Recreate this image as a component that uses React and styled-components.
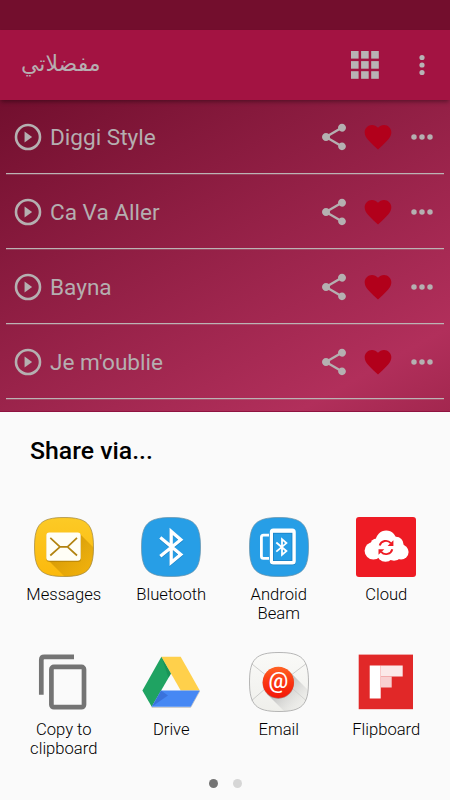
import React from "react";
import styled, { createGlobalStyle } from "styled-components";

const songs = ["Diggi Style", "Ca Va Aller", "Bayna", "Je m'oublie"];

const SQUIRCLE = "M.5 30C.5 7 7 .5 30 .5S59.5 7 59.5 30 53 59.5 30 59.5 .5 53 .5 30Z";

function App() {
  return (
    <>
      <GlobalStyle />
      <Screen>
        <StatusBar />
        <Header>
          <Title dir="rtl">مفضلاتي</Title>
          <GridIcon />
          <MenuIcon />
        </Header>
        <SongList>
          {songs.map((name) => (
            <Song key={name} name={name} />
          ))}
        </SongList>
        <Sheet>
          <SheetTitle>Share via...</SheetTitle>
          <Targets>
            {targets.map((target) => (
              <Target key={target.label}>
                <TargetIcon viewBox="0 0 60 60">{target.icon}</TargetIcon>
                <Label>{target.label}</Label>
              </Target>
            ))}
          </Targets>
          <Pager>
            <PageDot $active />
            <PageDot />
          </Pager>
        </Sheet>
      </Screen>
    </>
  );
}

const Song = ({ name }) => {
  return (
    <Row>
      <Glyph viewBox="0 0 24 24">
        <circle cx="12" cy="12" r="9" fill="none" stroke="#b5b0b1" strokeWidth="1.95" />
        <path d="M9.4 7.8v8.4L15.1 12z" />
      </Glyph>
      <SongName>{name}</SongName>
      <Actions>
        <Glyph viewBox="0 0 24 24">
          <path d="M18 16.08c-.76 0-1.44.3-1.96.77L8.91 12.7c.05-.23.09-.46.09-.7s-.04-.47-.09-.7l7.05-4.11c.54.5 1.25.81 2.04.81 1.66 0 3-1.34 3-3s-1.34-3-3-3-3 1.34-3 3c0 .24.04.47.09.7L8.04 9.81C7.5 9.31 6.79 9 6 9c-1.66 0-3 1.34-3 3s1.34 3 3 3c.79 0 1.5-.31 2.04-.81l7.12 4.16c-.05.21-.08.43-.08.65 0 1.61 1.31 2.92 2.92 2.92s2.92-1.31 2.92-2.92-1.31-2.92-2.92-2.92z" />
        </Glyph>
        <Glyph viewBox="0 0 24 24" $color="#b2001b">
          <path d="M12 21.35l-1.45-1.32C5.4 15.36 2 12.28 2 8.5 2 5.42 4.42 3 7.5 3c1.74 0 3.41.81 4.5 2.09C13.09 3.81 14.76 3 16.5 3 19.58 3 22 5.42 22 8.5c0 3.78-3.4 6.86-8.55 11.54L12 21.35z" />
        </Glyph>
        <Glyph viewBox="0 0 24 24">
          <circle cx="6" cy="12" r="2.05" />
          <circle cx="12" cy="12" r="2.05" />
          <circle cx="18" cy="12" r="2.05" />
        </Glyph>
      </Actions>
    </Row>
  );
};

const GridIcon = () => (
  <HeaderGlyph viewBox="0 0 28 28" $size={28} $right={29.5}>
    {[0, 10.1, 20.2].map((y) =>
      [0, 10.1, 20.2].map((x) => <rect key={x + "-" + y} x={x} y={y} width="7.6" height="7.6" />)
    )}
  </HeaderGlyph>
);

const MenuIcon = () => (
  <HeaderGlyph viewBox="0 0 28 28" $size={28} $right={13.8}>
    <circle cx="14" cy="6.5" r="2.6" />
    <circle cx="14" cy="14" r="2.6" />
    <circle cx="14" cy="21.5" r="2.6" />
  </HeaderGlyph>
);

const MessagesIcon = () => (
  <>
    <defs>
      <linearGradient id="msg" x2="0" y2="1">
        <stop offset="0" stopColor="#fcca26" />
        <stop offset="1" stopColor="#fcb90c" />
      </linearGradient>
      <linearGradient id="msgShade" x2="1" y2="1">
        <stop offset=".3" stopColor="#c98e00" stopOpacity=".75" />
        <stop offset="1" stopColor="#e0a208" stopOpacity=".3" />
      </linearGradient>
      <clipPath id="squircle">
        <path d={SQUIRCLE} />
      </clipPath>
    </defs>
    <path d={SQUIRCLE} fill="url(#msg)" />
    <path d="M46 17L60 31V60H31L14 43Z" fill="url(#msgShade)" clipPath="url(#squircle)" />
    <path d={SQUIRCLE} fill="none" stroke="#9c8440" strokeWidth=".7" />
    <rect x="12.3" y="16.3" width="34.7" height="28.6" rx="3" fill="#a87806" opacity=".6" />
    <rect x="12.3" y="15.6" width="34.4" height="28.2" rx="3" fill="#fffef6" />
    <path d="M16.3 20.8L26 29.8H33.5L43 20.8M16.3 38.5L26 29.8M33.5 29.8L43 38.5" fill="none" stroke="#b28310" strokeWidth="1.7" />
  </>
);

const BluetoothIcon = () => (
  <>
    <path d={SQUIRCLE} fill="#279ee6" stroke="#6790a8" strokeWidth=".7" />
    <path d="M19.3 21.3L39.8 38.2 30.2 46.3V15.2L39.8 23.6 19.3 40" fill="none" stroke="#1680c4" strokeWidth="3.3" />
    <path d="M19.3 20.5L39.8 37.4 30.2 45.5V14.4L39.8 22.8 19.3 39.2" fill="none" stroke="#fff" strokeWidth="3.3" />
  </>
);

const BeamIcon = () => (
  <>
    <path d={SQUIRCLE} fill="#279ee6" stroke="#6790a8" strokeWidth=".7" />
    <path d="M20 18.2H14.5Q12.4 18.2 12.4 20.3V39.3Q12.4 41.4 14.5 41.4H20" fill="none" stroke="#fff" strokeWidth="2.8" />
    <rect x="20.8" y="12.2" width="26" height="36" rx="3.5" fill="#1680c4" />
    <rect x="20.8" y="11.5" width="26" height="36" rx="3.5" fill="#fff" />
    <rect x="24" y="15.8" width="19.4" height="28.2" fill="#1c84c8" />
    <rect x="24.9" y="16.7" width="17.6" height="26.4" fill="#279ee6" />
    <path d="M27.3 25.5L37.4 34.1 33 37.8V22.2L37.4 26.1 27.3 34.6" fill="none" stroke="#fff" strokeWidth="1.8" />
  </>
);

const CloudIcon = () => (
  <>
    <rect width="60" height="60" rx="3" fill="#ee1b24" />
    <g fill="#fff">
      <circle cx="17.4" cy="33.8" r="8.8" />
      <circle cx="20.5" cy="27.5" r="6" />
      <circle cx="30.2" cy="24.2" r="10.6" />
      <circle cx="40" cy="27.3" r="7.5" />
      <circle cx="45" cy="35" r="7.6" />
      <circle cx="38" cy="34.5" r="9.2" />
      <circle cx="29.5" cy="36.2" r="8.6" />
    </g>
    <path d="M23.7 28.6A6.4 6.4 0 0 1 34.8 26.2M36.3 32.2A6.4 6.4 0 0 1 25.2 34.8" fill="none" stroke="#ee1b24" strokeWidth="1.9" />
    <path d="M37.4 23.3V29H31.6ZM22.5 37.8V32.2H28.3Z" fill="#ee1b24" />
  </>
);

const CopyIcon = () => (
  <g fill="none" stroke="#747474" strokeWidth="4.7">
    <path d="M40 4.9H10.3Q7.3 4.9 7.3 7.9V42.7" />
    <rect x="17.4" y="14.9" width="32.6" height="40.3" rx="2.5" />
  </g>
);

const DriveIcon = () => (
  <>
    <path d="M10.7 55.3H49.7L58.7 39" fill="none" stroke="#c4c4c4" />
    <path d="M20.4 4.8L30 21.5 10.7 54.8 1.4 38.5Z" fill="#1fa362" />
    <path d="M20.4 4.8H39.7L58.7 38.5H39.7Z" fill="#ffd04b" />
    <path d="M20 38.5H58.7L49.7 54.8H10.7Z" fill="#4688f4" />
    <path d="M20 38.5L27 43.5 10.7 54.8Z" fill="#3467d0" opacity=".65" />
    <path d="M20.4 4.8L30 21.5 27.5 25.8Z" fill="#13854e" opacity=".5" />
  </>
);

const EmailIcon = () => (
  <>
    <defs>
      <linearGradient id="mailBg" x2="0" y2="1">
        <stop offset="0" stopColor="#fafaf8" />
        <stop offset="1" stopColor="#efefeb" />
      </linearGradient>
      <linearGradient id="mailShade" x2="1" y2="1">
        <stop offset=".3" stopColor="#b5b5b5" />
        <stop offset=".8" stopColor="#e4e4e2" stopOpacity=".3" />
      </linearGradient>
      <linearGradient id="mailRed" x2="0" y2="1">
        <stop offset="0" stopColor="#ff6323" />
        <stop offset=".5" stopColor="#fb3512" />
        <stop offset="1" stopColor="#f31708" />
      </linearGradient>
    </defs>
    <path d={SQUIRCLE} fill="url(#mailBg)" />
    <path d="M2.7 11.8L29 33 57 11.8M2.7 48.5L24 30M57 48.5L36 30" fill="none" stroke="#c3c3c0" strokeWidth=".8" />
    <path d="M41 20L60 39V60H36L18 42Z" fill="url(#mailShade)" clipPath="url(#squircle)" />
    <path d={SQUIRCLE} fill="none" stroke="#a4a4a4" strokeWidth=".8" />
    <circle cx="29.3" cy="31" r="15.7" fill="#a32a1c" opacity=".6" />
    <circle cx="29.3" cy="30.3" r="15.6" fill="url(#mailRed)" />
    <AtSign x="29.3" y="36.2">@</AtSign>
  </>
);

const FlipboardIcon = () => (
  <>
    <rect x="2.7" y="2.6" width="54.3" height="54.6" fill="#e12828" />
    <rect x="13.7" y="13.5" width="11" height="33" fill="#fff" />
    <rect x="24.7" y="13.5" width="22" height="11" fill="#fbe9e9" />
    <rect x="24.7" y="24.5" width="11" height="11" fill="#f8d0d1" />
  </>
);

const targets = [
  { label: "Messages", icon: <MessagesIcon /> },
  { label: "Bluetooth", icon: <BluetoothIcon /> },
  { label: "Android Beam", icon: <BeamIcon /> },
  { label: "Cloud", icon: <CloudIcon /> },
  { label: "Copy to clipboard", icon: <CopyIcon /> },
  { label: "Drive", icon: <DriveIcon /> },
  { label: "Email", icon: <EmailIcon /> },
  { label: "Flipboard", icon: <FlipboardIcon /> },
];

export default App;

const GlobalStyle = createGlobalStyle`
  body {
    margin: 0;
    font-family: Roboto, "Noto Sans", sans-serif;
  }
`;

const Screen = styled.div`
  display: flex;
  flex-direction: column;
  width: 450px;
  height: 800px;
  overflow: hidden;
  background: #fafafa;
`;

const StatusBar = styled.div`
  flex: none;
  height: 30px;
  background: #730e2d;
`;

const Header = styled.header`
  flex: none;
  display: flex;
  align-items: center;
  height: 70px;
  box-sizing: border-box;
  padding-left: 21px;
  background: #a31342;
  box-shadow: 0 3px 4px -1px rgba(0, 0, 0, 0.35);
  z-index: 1;
`;

const Title = styled.h1`
  margin: 0 auto 0 0;
  padding-bottom: 3px;
  font-family: "DejaVu Sans", sans-serif;
  font-size: 22px;
  font-weight: 400;
  line-height: 30px;
  color: #b7aeb1;
`;

const HeaderGlyph = styled.svg`
  width: ${(props) => props.$size}px;
  height: ${(props) => props.$size}px;
  margin-right: ${(props) => props.$right}px;
  fill: #b8b3b5;
`;

const SongList = styled.div`
  flex: none;
  height: 312px;
  box-sizing: border-box;
  padding: 0 6px;
  overflow: hidden;
  border-bottom: 1px solid #8f1240;
  background: linear-gradient(151deg, #720f2e 0%, #b12f5b 85%, #a3274f 100%);
`;

const Row = styled.div`
  display: flex;
  align-items: center;
  height: 75px;
  box-sizing: border-box;
  padding: 1px 6px 0 6px;
  border-bottom: 1px solid #bcb3b4;
  box-shadow: 0 1px 0 rgba(188, 179, 180, 0.25);

  &:first-child {
    margin-top: -1px;
  }
`;

const Glyph = styled.svg`
  flex: none;
  width: 32px;
  height: 32px;
  fill: ${(props) => props.$color || "#b5b0b1"};
`;

const SongName = styled.span`
  flex: 1;
  padding: 2px 0 0 6px;
  font-size: 22.6px;
  line-height: 32px;
  color: #b5aeb0;
`;

const Actions = styled.div`
  display: flex;
  gap: 11.8px;
`;

const Sheet = styled.section`
  flex: 1;
  display: flex;
  flex-direction: column;
  padding: 23px 10px 0;
  background: #fafafa;
`;

const SheetTitle = styled.h2`
  margin: 0 0 0 20px;
  font-size: 24.8px;
  font-weight: 500;
  line-height: 32px;
  color: #000;
`;

const Targets = styled.div`
  display: grid;
  grid-template-columns: repeat(4, 1fr);
  grid-auto-rows: 135px;
  margin-top: 50.3px;
`;

const Target = styled.div`
  display: flex;
  flex-direction: column;
  align-items: center;
`;

const TargetIcon = styled.svg`
  width: 60px;
  height: 60px;
`;

const Label = styled.span`
  width: 86px;
  margin-top: 8px;
  font-size: 16.6px;
  font-weight: 300;
  line-height: 19px;
  text-align: center;
  color: #000;
`;

const AtSign = styled.text`
  font-family: Roboto, sans-serif;
  font-size: 22px;
  font-weight: 500;
  text-anchor: middle;
  fill: #fff;
`;

const Pager = styled.div`
  display: flex;
  justify-content: center;
  gap: 15px;
  margin-top: -8.3px;
`;

const PageDot = styled.span`
  width: 9px;
  height: 9px;
  border-radius: 50%;
  background: ${(props) => (props.$active ? "#747474" : "#d6d6d6")};
`;
